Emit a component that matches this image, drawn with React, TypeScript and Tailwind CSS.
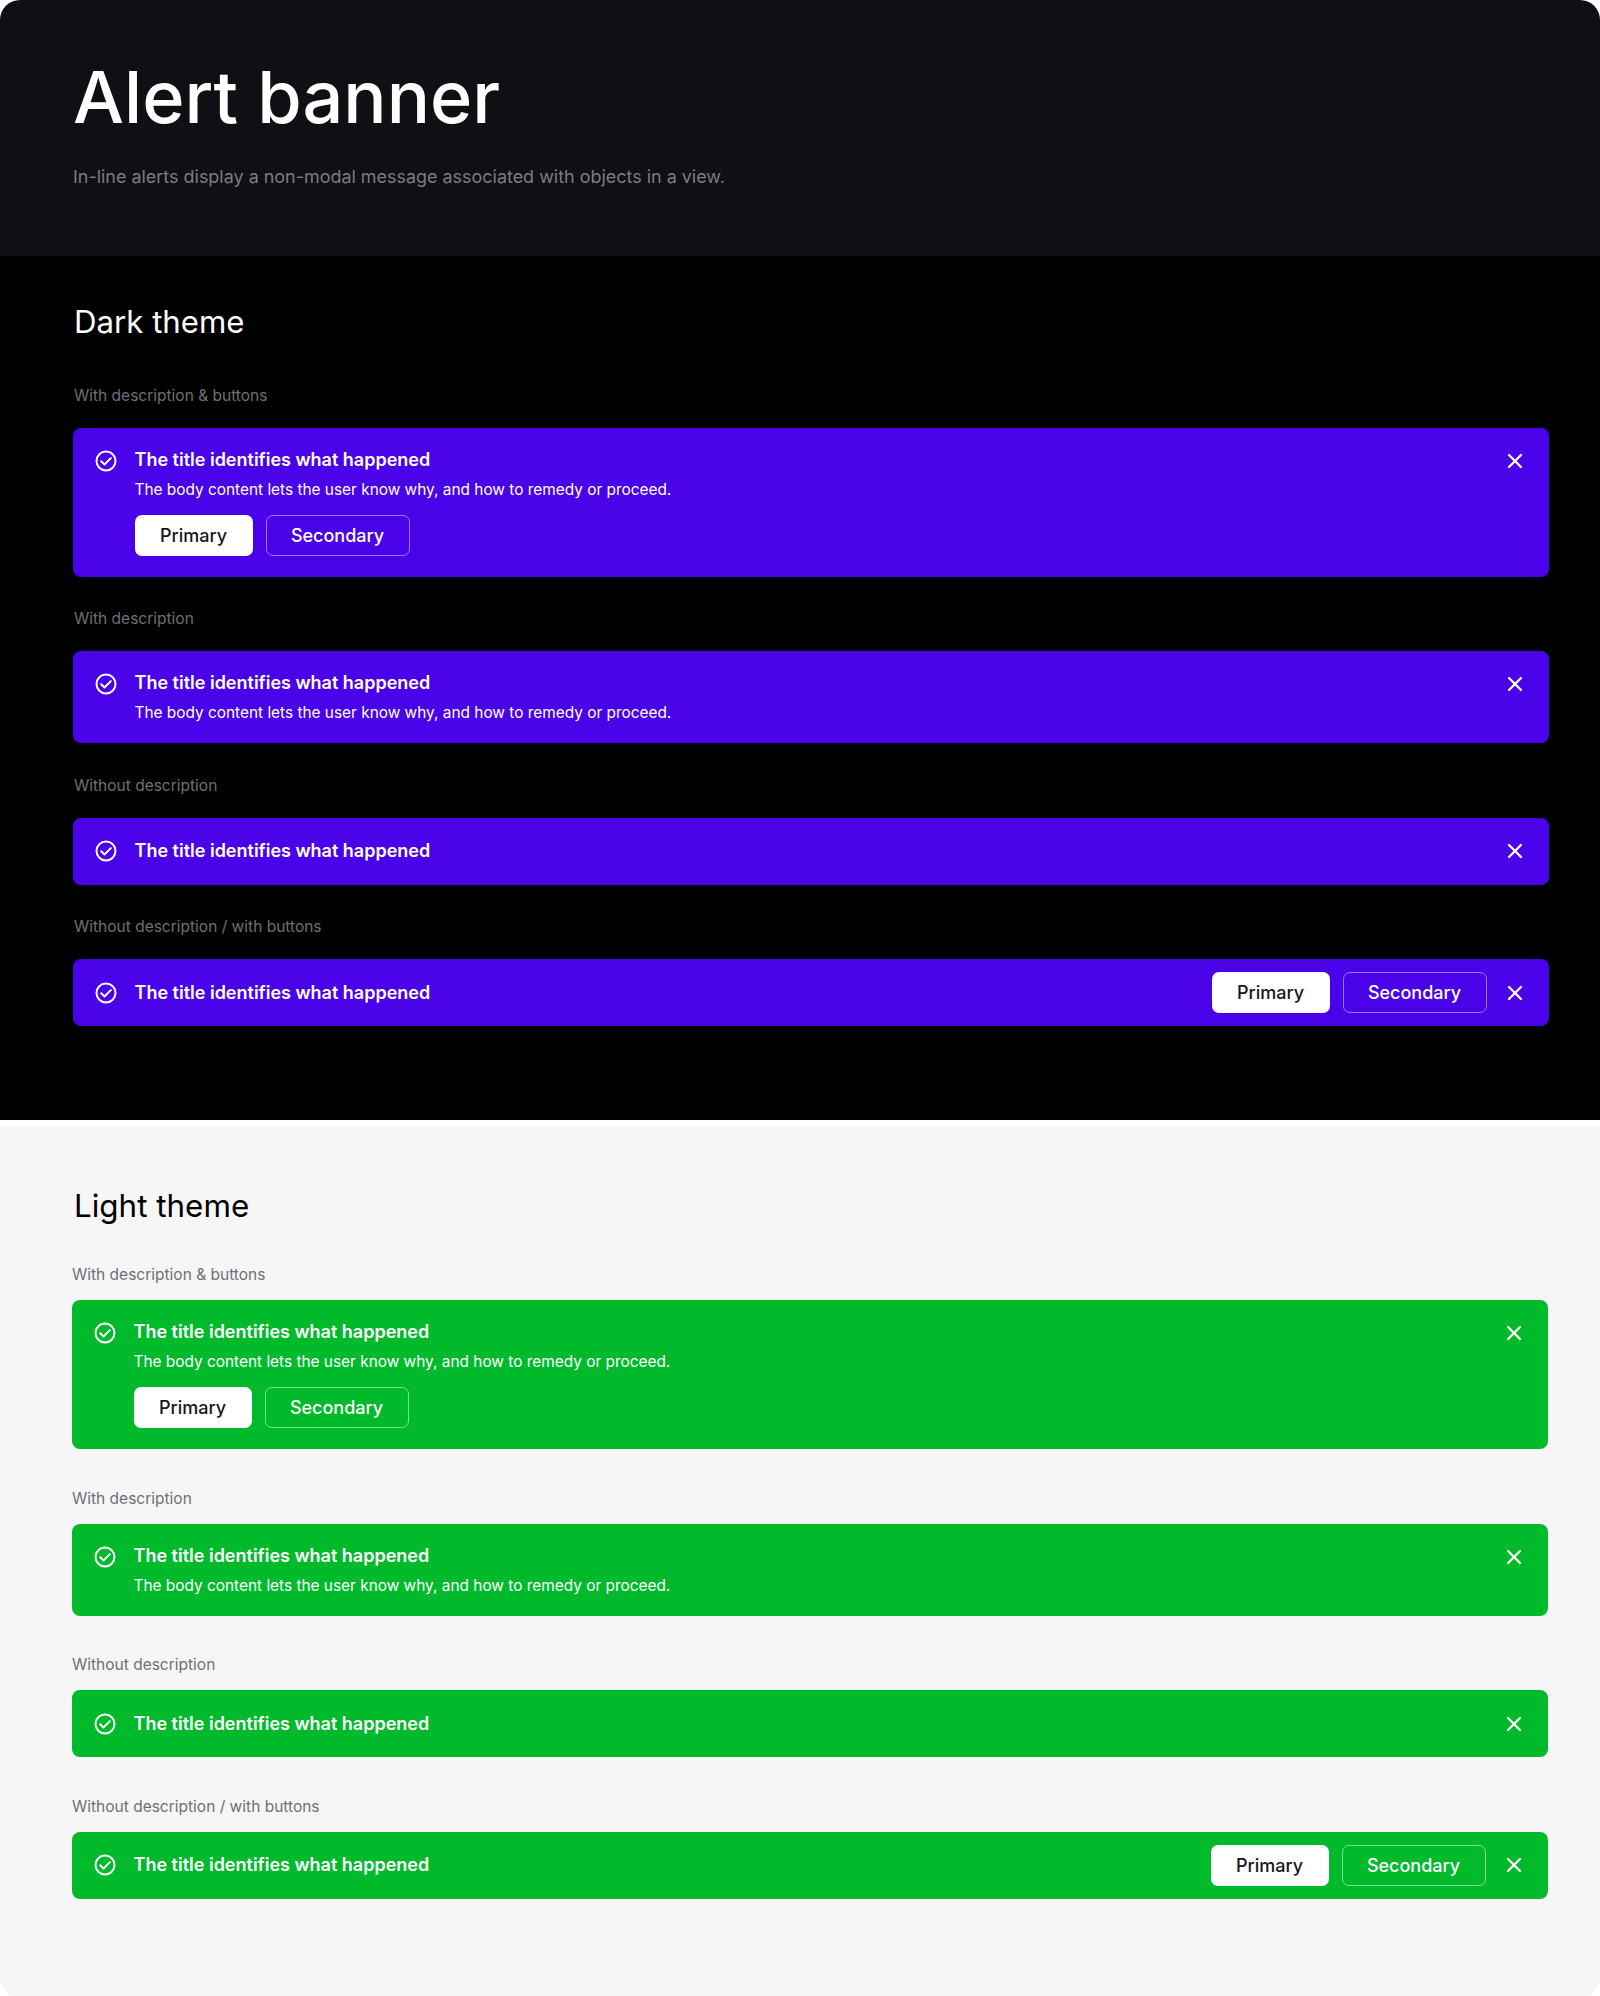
import { X } from "lucide-react";

type Theme = "dark" | "light";

function CheckIcon() {
  return (
    <svg width="24" height="24" viewBox="0 0 24 24" fill="none" stroke="white" strokeWidth="2" strokeLinecap="round" strokeLinejoin="round" className="shrink-0">
      <circle cx="12" cy="12" r="9.5" />
      <path d="m7.2 12.3 3.3 3.2 6.3-6.4" />
    </svg>
  );
}

function Buttons({ theme }: { theme: Theme }) {
  return (
    <div className="flex gap-[13px]">
      <button className="h-[41px] w-[118px] rounded-[7px] bg-white text-[18px] font-medium text-[#16161d]">Primary</button>
      <button
        className={
          theme === "dark"
            ? "h-[41px] w-[144px] rounded-[7px] border border-white/45 text-[18px] font-medium text-white"
            : "h-[41px] w-[144px] rounded-[7px] border border-white/50 text-[18px] font-medium text-white"
        }
      >
        Secondary
      </button>
    </div>
  );
}

function Banner({
  theme,
  variant,
}: {
  theme: Theme;
  variant: "full" | "description" | "plain" | "inline";
}) {
  const bg = theme === "dark" ? "bg-[#4a03e8]" : "bg-[#00ba2b]";
  const title = "The title identifies what happened";
  const body = "The body content lets the user know why, and how to remedy or proceed.";

  if (variant === "plain" || variant === "inline") {
    return (
      <div className={`${bg} flex h-[67px] items-center gap-[16.5px] rounded-[8px] pl-[21px] pr-[22px] text-white`}>
        <CheckIcon />
        <p className="flex-1 text-[18px] font-semibold leading-[28px]">{title}</p>
        {variant === "inline" && <Buttons theme={theme} />}
        <X size={24} strokeWidth={2.25} className="shrink-0" />
      </div>
    );
  }

  return (
    <div className={`${bg} flex items-start gap-[16.5px] rounded-[8px] pl-[21px] pr-[22px] pt-[18px] text-white ${variant === "full" ? "pb-[21px]" : "pb-[18px]"}`}>
      <div className="pt-[3px]">
        <CheckIcon />
      </div>
      <div className="flex-1">
        <p className="text-[18px] font-semibold leading-[28px]">{title}</p>
        <p className="mt-[4px] text-[15.4px] leading-[24px]">{body}</p>
        {variant === "full" && (
          <div className="mt-[13px]">
            <Buttons theme={theme} />
          </div>
        )}
      </div>
      <div className="pt-[3px]">
        <X size={24} strokeWidth={2.25} />
      </div>
    </div>
  );
}

function ThemeSection({ theme }: { theme: Theme }) {
  const dark = theme === "dark";
  const rows: { label: string; variant: "full" | "description" | "plain" | "inline" }[] = [
    { label: "With description & buttons", variant: "full" },
    { label: "With description", variant: "description" },
    { label: "Without description", variant: "plain" },
    { label: "Without description / with buttons", variant: "inline" },
  ];

  return (
    <section className={dark ? "bg-black pb-[94px] pl-[73px] pr-[51px] pt-[46px]" : "mt-[6px] rounded-b-[20px] bg-[#f6f6f6] pb-[98px] pl-[72px] pr-[52px] pt-[60px]"}>
      <h2 className={dark ? "pl-px text-[31.2px] font-normal leading-[40px] text-white" : "pl-[2px] text-[31.4px] font-normal leading-[40px] text-black"}>
        {dark ? "Dark theme" : "Light theme"}
      </h2>
      <div className={dark ? "mt-[44px] flex flex-col gap-[32.4px]" : "mt-[39px] flex flex-col gap-[39.5px]"}>
        {rows.map((row) => (
          <div key={row.label}>
            <p className={dark ? "mb-[22px] pl-px text-[15.5px] leading-[20px] text-[#6f6f77]" : "mb-[15px] text-[15.5px] leading-[20px] text-[#6f6f77]"}>{row.label}</p>
            <Banner theme={theme} variant={row.variant} />
          </div>
        ))}
      </div>
    </section>
  );
}

export default function App() {
  return (
    <div className="bg-white font-['Inter',sans-serif]">
      <header className="h-[256px] rounded-t-[20px] bg-[#0f0f14] pl-[73px] pt-[52px]">
        <h1 className="text-[72px] font-medium leading-[90px] text-white">Alert banner</h1>
        <p className="mt-[21px] text-[17.95px] leading-[28px] text-[#7c7c84]">
          In-line alerts display a non-modal message associated with objects in a view.
        </p>
      </header>
      <ThemeSection theme="dark" />
      <ThemeSection theme="light" />
    </div>
  );
}
